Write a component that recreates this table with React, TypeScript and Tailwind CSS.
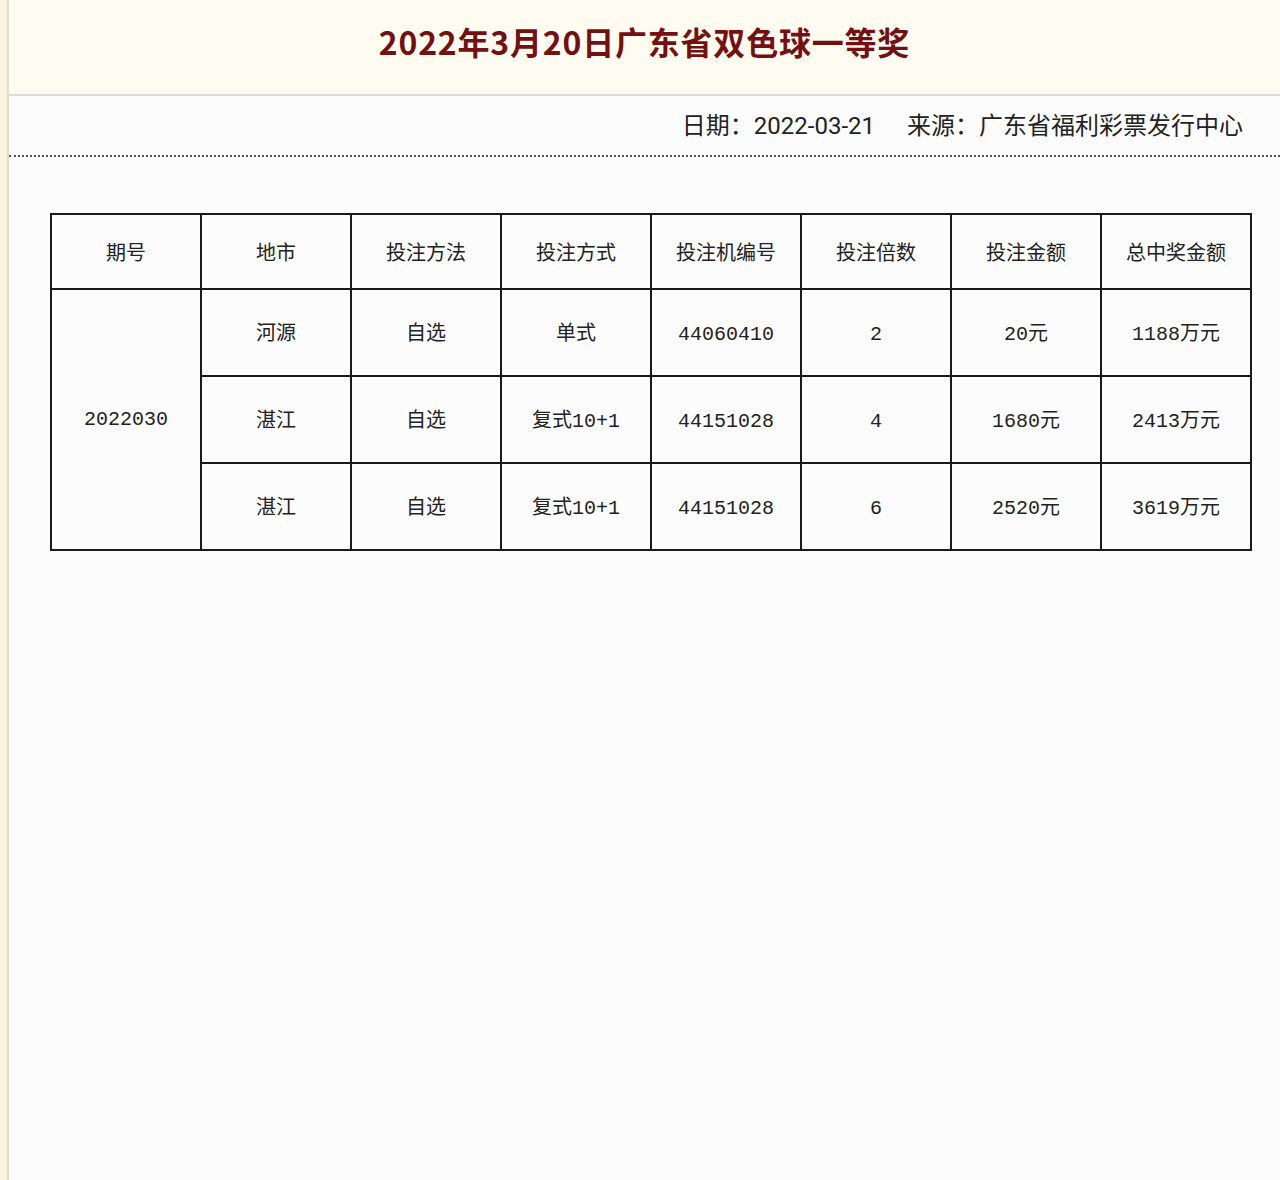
import React from "react";

const heads = ["期号", "地市", "投注方法", "投注方式", "投注机编号", "投注倍数", "投注金额", "总中奖金额"];

const rows = [
  ["河源", "自选", "单式", "44060410", "2", "20元", "1188万元"],
  ["湛江", "自选", "复式10+1", "44151028", "4", "1680元", "2413万元"],
  ["湛江", "自选", "复式10+1", "44151028", "6", "2520元", "3619万元"],
];

const cell = "border-2 border-[#1a1a1a] text-center align-middle";

const App = () => {
  return (
    <div className="min-h-[1180px] flex bg-[#fcfcfc]">
      <div className="w-[9px] bg-[#faf3df] border-r-2 border-[#e2ddd0]"></div>
      <div className="flex-1">
        <div className="h-[96px] bg-[#fefcf0] border-b-2 border-[#dedcd6] flex items-center justify-center pb-[12px]">
          <h1 className="text-[32px] leading-none font-bold text-[#741010] tracking-[0.8px] font-['Noto_Sans_CJK_SC',sans-serif]">
            2022年3月20日广东省双色球一等奖
          </h1>
        </div>
        <div className="h-[61px] flex items-center justify-end pr-[37px] border-b-2 border-dotted border-[#555] text-[24px] text-[#222] font-['Roboto','Noto_Sans_CJK_SC',sans-serif]">
          <span>日期：2022-03-21</span>
          <span className="ml-[32px]">来源：广东省福利彩票发行中心</span>
        </div>
        <div className="pt-[56px] pl-[41px]">
          <table className="table-fixed border-collapse w-[1202px] text-[20px] text-[#222] font-['Liberation_Mono','Noto_Sans_CJK_SC',monospace]">
            <thead>
              <tr className="h-[75px]">
                {heads.map((h) => (
                  <th key={h} className={`${cell} font-normal w-[150px] pt-[6px]`}>
                    {h}
                  </th>
                ))}
              </tr>
            </thead>
            <tbody>
              {rows.map((r, i) => (
                <tr key={i} className="h-[87px]">
                  {i === 0 && (
                    <td rowSpan={3} className={cell}>
                      2022030
                    </td>
                  )}
                  {r.map((v, j) => (
                    <td key={j} className={`${cell} pt-[4px]`}>
                      {v}
                    </td>
                  ))}
                </tr>
              ))}
            </tbody>
          </table>
        </div>
      </div>
    </div>
  );
};

export default App;
